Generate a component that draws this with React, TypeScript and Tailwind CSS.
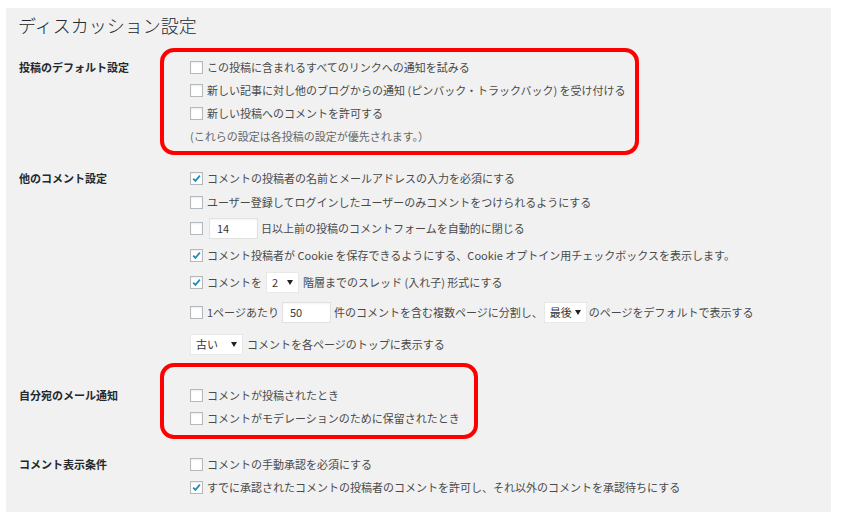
import React from "react";

const Check = ({ checked }: { checked?: boolean }) => (
  <span className="w-[13px] h-[13px] bg-white border border-[#b4b9be] shadow-[inset_0_1px_2px_rgba(0,0,0,0.08)] flex items-center justify-center shrink-0">
    {checked && (
      <svg width="11" height="11" viewBox="0 0 11 11">
        <path d="M2.2 5.6 L4.4 7.9 L8.9 2.6" stroke="#1e8cbe" strokeWidth="1.7" fill="none" />
      </svg>
    )}
  </span>
);

const Input = ({ value, w }: { value: string; w: string }) => (
  <span className={`${w} h-[21px] bg-white border border-[#e2e2e2] shadow-[inset_0_1px_2px_rgba(0,0,0,0.05)] flex items-center pl-[7px] text-[#32373c] shrink-0`}>
    {value}
  </span>
);

const Select = ({ value, w }: { value: string; w: string }) => (
  <span className={`${w} h-[21px] bg-white border border-[#e8e8e8] flex items-center justify-between pl-[5px] pr-[5px] text-[#32373c] shrink-0`}>
    <span>{value}</span>
    <svg width="6" height="5" viewBox="0 0 6 5">
      <path d="M0 0 L6 0 L3 5 Z" fill="#222" />
    </svg>
  </span>
);

const Row = ({ h, children }: { h: string; children: React.ReactNode }) => (
  <div className={`${h} flex items-center whitespace-nowrap`}>{children}</div>
);

export default function App() {
  return (
    <div
      className="relative w-[843px] h-[525px] bg-white text-[11px] text-[#4a4a4a]"
      style={{ fontFamily: '"Noto Sans CJK JP", "Noto Sans", sans-serif' }}
    >
      <div className="absolute left-[6px] top-[8px] w-[825px] h-[504px] bg-[#f1f1f1]" />
      <div className="relative pt-[8px] pl-[19px]">
        <div className="h-[34px] flex items-center -ml-[1px] text-[18px] font-light text-[#23282d] leading-none">
          ディスカッション設定
        </div>

        {/* Section 1 */}
        <div className="mt-[14px] flex">
          <div className="w-[171px] h-[23px] flex items-center font-bold text-[#23282d]">投稿のデフォルト設定</div>
          <div className="flex flex-col">
            <Row h="h-[23px]">
              <Check />
              <span className="ml-[4px]">この投稿に含まれるすべてのリンクへの通知を試みる</span>
            </Row>
            <Row h="h-[23px]">
              <Check />
              <span className="ml-[4px]">新しい記事に対し他のブログからの通知 (ピンバック・トラックバック) を受け付ける</span>
            </Row>
            <Row h="h-[23px]">
              <Check />
              <span className="ml-[4px]">新しい投稿へのコメントを許可する</span>
            </Row>
            <Row h="h-[23px]">
              <span className="text-[#666]">(これらの設定は各投稿の設定が優先されます。）</span>
            </Row>
          </div>
        </div>

        {/* Section 2 */}
        <div className="mt-[18px] flex">
          <div className="w-[171px] h-[24px] flex items-center font-bold text-[#23282d]">他のコメント設定</div>
          <div className="flex flex-col">
            <Row h="h-[24px]">
              <Check checked />
              <span className="ml-[4px]">コメントの投稿者の名前とメールアドレスの入力を必須にする</span>
            </Row>
            <Row h="h-[24px]">
              <Check />
              <span className="ml-[4px]">ユーザー登録してログインしたユーザーのみコメントをつけられるようにする</span>
            </Row>
            <Row h="h-[28px]">
              <Check />
              <span className="ml-[6px]">
                <Input value="14" w="w-[49px]" />
              </span>
              <span className="ml-[3px]">日以上前の投稿のコメントフォームを自動的に閉じる</span>
            </Row>
            <Row h="h-[26px]">
              <Check checked />
              <span className="ml-[4px]">コメント投稿者が Cookie を保存できるようにする、Cookie オプトイン用チェックボックスを表示します。</span>
            </Row>
            <Row h="h-[28px]">
              <Check checked />
              <span className="ml-[4px]">コメントを</span>
              <span className="ml-[4px]">
                <Select value="2" w="w-[33px]" />
              </span>
              <span className="ml-[4px]">階層までのスレッド (入れ子) 形式にする</span>
            </Row>
            <Row h="h-[32px]">
              <Check />
              <span className="ml-[4px]">1ページあたり</span>
              <span className="ml-[3px]">
                <Input value="50" w="w-[49px]" />
              </span>
              <span className="ml-[3px]">件のコメントを含む複数ページに分割し、</span>
              <span className="ml-[1px]">
                <Select value="最後" w="w-[43px]" />
              </span>
              <span className="ml-[2px]">のページをデフォルトで表示する</span>
            </Row>
            <Row h="h-[32px]">
              <Select value="古い" w="w-[53px]" />
              <span className="ml-[4px]">コメントを各ページのトップに表示する</span>
            </Row>
          </div>
        </div>

        {/* Section 3 */}
        <div className="mt-[24px] flex">
          <div className="w-[171px] h-[23px] flex items-center font-bold text-[#23282d]">自分宛のメール通知</div>
          <div className="flex flex-col">
            <Row h="h-[23px]">
              <Check />
              <span className="ml-[4px]">コメントが投稿されたとき</span>
            </Row>
            <Row h="h-[23px]">
              <Check />
              <span className="ml-[4px]">コメントがモデレーションのために保留されたとき</span>
            </Row>
          </div>
        </div>

        {/* Section 4 */}
        <div className="mt-[23px] flex">
          <div className="w-[171px] h-[23px] flex items-center font-bold text-[#23282d]">コメント表示条件</div>
          <div className="flex flex-col">
            <Row h="h-[23px]">
              <Check />
              <span className="ml-[4px]">コメントの手動承認を必須にする</span>
            </Row>
            <Row h="h-[23px]">
              <Check checked />
              <span className="ml-[4px]">すでに承認されたコメントの投稿者のコメントを許可し、それ以外のコメントを承認待ちにする</span>
            </Row>
          </div>
        </div>
      </div>

      {/* annotations */}
      <div className="absolute left-[160px] top-[48px] w-[479px] h-[107px] border-[4px] border-[#ff0000] rounded-[14px]" />
      <div className="absolute left-[160px] top-[363px] w-[318px] h-[76px] border-[4px] border-[#ff0000] rounded-[14px]" />
    </div>
  );
}
